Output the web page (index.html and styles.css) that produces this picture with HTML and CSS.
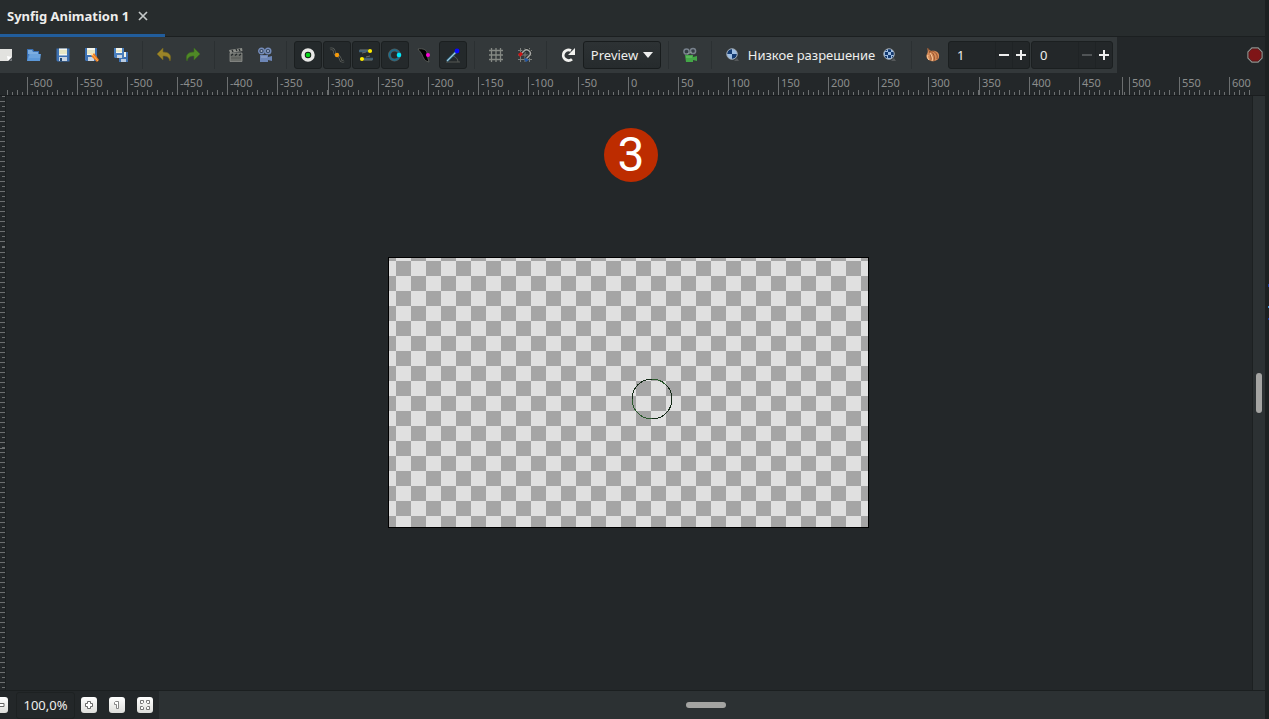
FILE: index.html
```html
<!DOCTYPE html>
<html lang="ru">
<head>
<meta charset="utf-8">
<title>Synfig Animation 1</title>
<link rel="stylesheet" href="styles.css">
</head>
<body>
<div class="window">
<main class="editor">
  <header class="tabs">
    <div class="tab">
      <span>Synfig Animation 1</span>
      <button class="tab-close" aria-label="Close"><svg width="10" height="10" viewBox="0 0 10 10"><path d="M1 1l8 8M9 1l-8 8" stroke="#c4c8c8" stroke-width="1.7" fill="none"/></svg></button>
    </div>
  </header>

  <div class="toolrow">
  <nav class="toolbar">
    <button class="tool" aria-label="New"><svg viewBox="0 0 16 16"><path d="M0 2h15v8l-4 4H0z" fill="#e2e2df"/><path d="M15 10h-4v4z" fill="#4b4e4e"/><path d="M10 9l5 1-4 4z" fill="#fff"/><path d="M15 11v3h-3z" fill="#73767a"/></svg></button>
    <button class="tool" aria-label="Open"><svg viewBox="0 0 16 16"><path d="M1 2h6l1 2h5v10H1z" fill="#3a70b4"/><path d="M2 3h4l1 2h5v2H2z" fill="#7daee0"/><path d="M3 7h12l-1 7H1z" fill="#5c98d8"/><path d="M4 8h10M3 10h11" stroke="#87b7e8" stroke-width=".7"/></svg></button>
    <button class="tool" aria-label="Save"><svg viewBox="0 0 16 16"><path d="M1.500 1.500h13v13h-12l-1-1z" fill="#3d71b3"/><path d="M4 1.500h8v7H4z" fill="#f6f6ec"/><path d="M4 4h8M4 6h8" stroke="#d8d89e"/><path d="M4 10h8v4H4z" fill="#c9d5e2"/><path d="M5 11h2v3H5z" fill="#20466f"/></svg></button>
    <button class="tool" aria-label="Save as"><svg viewBox="0 0 16 16"><path d="M1 1h12v13H2l-1-1z" fill="#3d71b3"/><path d="M3 1h8v7H3z" fill="#f6f6ec"/><path d="M3 4h8M3 6h8" stroke="#d8d89e"/><path d="M4 10h6v4H4z" fill="#c9d5e2"/><path d="M7 6l3 0 5 7-2 2-5-5z" fill="#ed7a18"/><path d="M8 7l6 7" stroke="#ffb35b"/><path d="M6 6l4 0-2 3z" fill="#ffe0a6"/></svg></button>
    <button class="tool" aria-label="Save all"><svg viewBox="0 0 16 16"><path d="M6 5h9v10H6z" fill="#3d71b3"/><path d="M10 5h3v5h-3z" fill="#f2f3e8"/><path d="M8 12h5v3H8z" fill="#b9cbe0"/><path d="M1 1h10v10H2l-1-1z" fill="#4a7fbd"/><path d="M3 1h6v5H3z" fill="#f6f6ec"/><path d="M3 4h6" stroke="#d8d89e"/><path d="M4 8h5v3H4z" fill="#c9d5e2"/></svg></button>
    <span class="sep"></span>
    <button class="tool" aria-label="Undo"><svg viewBox="0 0 16 16"><path d="M1 7l6-6v4c6 0 9 3 7 9-1-4-3-5-7-5v4z" fill="#9b8428" stroke="#72641e" stroke-width=".6"/></svg></button>
    <button class="tool" aria-label="Redo"><svg viewBox="0 0 16 16"><path d="M15 7L9 1v4C3 5 0 8 2 14c1-4 3-5 7-5v4z" fill="#4f8926" stroke="#3a691e" stroke-width=".6"/></svg></button>
    <span class="sep"></span>
    <button class="tool" aria-label="Render"><svg viewBox="0 0 16 16"><path d="M2 6h12v8.500H2z" fill="#6a6d69" stroke="#8d8f8b" stroke-width=".8"/><path d="M1 3l13-2 .5 3L2 6z" fill="#8c8e89"/><path d="M4 3l1 2M8 2l1 2M11 2l1 2" stroke="#252a2b" stroke-width="1.300"/><path d="M3 8.500l2-1.500M7 8.500l2-1.500M11 8.500l2-1.500" stroke="#252a2b" stroke-width="1.500"/><path d="M3 11h10" stroke="#4a4d4b" stroke-width=".7"/></svg></button>
    <button class="tool" aria-label="Preview window"><svg viewBox="0 0 16 16"><circle cx="4.500" cy="4" r="2.800" fill="#35465f" stroke="#758cb9" stroke-width="1.400"/><circle cx="11" cy="4" r="2.800" fill="#35465f" stroke="#758cb9" stroke-width="1.400"/><path d="M3 8h8v2l4-1v5l-4-1v2H3z" fill="#6d86b6"/><path d="M4 10h6" stroke="#9aabd0"/><circle cx="4.500" cy="4" r="1" fill="#a4b3cf"/><circle cx="11" cy="4" r="1" fill="#a4b3cf"/></svg></button>
    <span class="sep"></span>
    <button class="tool on" aria-label="Position handles"><svg viewBox="0 0 16 16"><circle cx="8" cy="8" r="5" fill="#171b18" stroke="#e8e8e6" stroke-width="3.500"/><circle cx="8" cy="8" r="2.300" fill="#08d61a"/></svg></button>
    <button class="tool on" aria-label="Vertex handles"><svg viewBox="0 0 16 16"><path d="M1 2c5-1 4 3 5 5s4 1 5 4 1 4 4 3" fill="none" stroke="#5c605d" stroke-width="2.500"/><path d="M1 2c5-1 4 3 5 5s4 1 5 4 1 4 4 3" fill="none" stroke="#191c1c" stroke-width="1"/><circle cx="8" cy="8" r="2.200" fill="#f59a0b"/></svg></button>
    <button class="tool on" aria-label="Tangent handles"><svg viewBox="0 0 16 16"><path d="M1 4h9M6 12h9" stroke="#3f6075" stroke-width="2.500"/><path d="M4 6l4-1M8 10l4-1M2 3h8M6 13h8" stroke="#696d6a"/><circle cx="12" cy="4" r="2.100" fill="#ffed00"/><circle cx="4" cy="12" r="2.100" fill="#ffed00"/></svg></button>
    <button class="tool on" aria-label="Radius handles"><svg viewBox="0 0 16 16"><circle cx="7.500" cy="8" r="5" fill="none" stroke="#50595b" stroke-width="3"/><circle cx="7.500" cy="8" r="5" fill="none" stroke="#176f90" stroke-width="1.500"/><circle cx="12" cy="8" r="2.300" fill="#00eafa"/></svg></button>
    <button class="tool" aria-label="Width handles"><svg viewBox="0 0 16 16"><path d="M2 2c5-1 10 1 9 6l2 7c-6-1-6-7-8-9C4 4 3 4 2 2z" fill="#000" stroke="#60635f" stroke-width=".8"/><circle cx="12" cy="8" r="2" fill="#ff00d8"/></svg></button>
    <button class="tool on" aria-label="Angle handles"><svg viewBox="0 0 16 16"><path d="M1 15h14M8 9c3 1 5 3 5 6" fill="none" stroke="#555955" stroke-width="1"/><path d="M2 14L12 4" stroke="#1d5472" stroke-width="2.600"/><path d="M2 14L12 4" stroke="#9ec9dc" stroke-width="1.200"/><circle cx="12" cy="4" r="2.400" fill="#0908ff"/></svg></button>
    <span class="sep"></span>
    <button class="tool" aria-label="Show grid"><svg viewBox="0 0 16 16"><path d="M3.500 1v14M8 1v14M12.500 1v14M1 3.500h14M1 8h14M1 12.500h14" stroke="#858984" stroke-width="1.300"/></svg></button>
    <button class="tool" aria-label="Snap to grid"><svg viewBox="0 0 16 16"><path d="M3.500 1v14M8 1v14M12.500 1v14M1 3.500h14M1 8h14M1 12.500h14" stroke="#7b7e7a"/><path d="M4 7l3-3c3-3 8 1 6 4l-4 4" stroke="#242829" stroke-width="3" fill="none"/><path d="M4 7l3-3c3-3 8 1 6 4l-4 4" stroke="#a8a9a6" stroke-width="1.500" fill="none"/><path d="M1 7l3-2 2 2-3 3z" fill="#d01414"/><path d="M7 12l2-1 3 2-3 2z" fill="#2558a2"/></svg></button>
    <span class="sep"></span>
    <button class="tool" aria-label="Refresh"><svg viewBox="0 0 16 16"><path d="M12 12.200a5.300 5.300 0 1 1-1-8.700" fill="none" stroke="#f2f2ef" stroke-width="2.800"/><path d="M15 1v7H8z" fill="#f2f2ef"/></svg></button>
    <button class="preview">Preview <svg width="10" height="6" viewBox="0 0 10 6"><path d="M0 0h10L5 6z" fill="#eee"/></svg></button>
    <span class="sep"></span>
    <button class="tool" aria-label="Background rendering"><svg viewBox="0 0 16 16"><circle cx="4.500" cy="4.500" r="2.600" fill="#343d45" stroke="#78818c" stroke-width="1.500"/><circle cx="11" cy="4" r="2.600" fill="#343d45" stroke="#78818c" stroke-width="1.500"/><path d="M3 8h8v2l4-1v5l-4-1v2H4z" fill="#43a747"/><path d="M4 10h6" stroke="#70c86e"/><path d="M5 7l5-2" stroke="#8b9b91"/></svg></button>
    <span class="sep"></span>
    <div class="resolution">
      <button class="tool" aria-label="Decrease resolution"><svg viewBox="0 0 16 16"><path d="M9 14h5l-2-3" fill="#55585a"/><circle cx="7" cy="7" r="5.200" fill="#9dbde2"/><path d="M7 7V2a5 5 0 0 0-5 5zM7 7v5a5 5 0 0 0 5-5z" fill="#143a70"/><circle cx="7" cy="7" r="5.300" fill="none" stroke="#a3acb4" stroke-width=".9"/></svg></button>
      <span>Низкое разрешение</span>
      <button class="tool" aria-label="Increase resolution"><svg viewBox="0 0 16 16"><path d="M9 14h5l-2-3" fill="#55585a"/><circle cx="7" cy="7" r="5.200" fill="#9dbde2"/><path d="M6 2h3v3H6zM3 5h3v3H3zM9 5h3v3H9zM6 8h3v3H6zM3 3h2v1H3zM3 9h2v2H3zM10 9h1v2h-1z" fill="#143a70"/><circle cx="7" cy="7" r="5.300" fill="none" stroke="#a3acb4" stroke-width=".9"/></svg></button>
    </div>
    <span class="sep"></span>
    <button class="tool" aria-label="Onion skin"><svg viewBox="0 0 16 16"><path d="M2 1l4 3c5-1 9 2 8 6 0 3-5 5-8 4s-6-4-4-7c1-2 1-4 0-6z" fill="#d58b58"/><path d="M3 1c1 3 4 8 3 13M5 4c4 2 5 6 4 10M7 4c4 1 6 4 5 8" fill="none" stroke="#824322" stroke-width=".8"/><path d="M3 8c-1 2 0 4 1 5M5 6c2 3 3 5 2 8" fill="none" stroke="#ffd0a1" stroke-width="1"/></svg></button>
    <div class="spin"><input aria-label="Past frames" value="1"><button aria-label="Fewer past frames"><svg viewBox="0 0 12 12"><path d="M1 6h10" stroke="#eee" stroke-width="2"/></svg></button><button aria-label="More past frames"><svg viewBox="0 0 12 12"><path d="M1 6h10M6 1v10" stroke="#eee" stroke-width="2"/></svg></button></div>
    <div class="spin"><input aria-label="Future frames" value="0"><button aria-label="Fewer future frames" disabled><svg viewBox="0 0 12 12"><path d="M1 6h10" stroke="#505456" stroke-width="2"/></svg></button><button aria-label="More future frames"><svg viewBox="0 0 12 12"><path d="M1 6h10M6 1v10" stroke="#eee" stroke-width="2"/></svg></button></div>
  </nav>
  <button class="record" aria-label="Stop"><svg width="16" height="16" viewBox="0 0 16 16"><path d="M5 1h6l4 4v6l-4 4H5l-4-4V5z" fill="#7f1517" stroke="#8c8e8b" stroke-width="1.400"/><path d="M5 2h6l3 3v6l-3 3H5l-3-3V5z" fill="none" stroke="#4c1718" stroke-width=".7"/></svg></button>
  </div>

  <div class="ruler" id="ruler"></div>

  <div class="work">
    <div class="vruler"><i class="upper"></i><i class="lower"></i></div>
    <section class="canvas">
      <div class="step">3</div>
      <div class="artboard"><svg class="origin" width="42" height="42" viewBox="0 0 42 42" shape-rendering="crispEdges"><circle cx="21" cy="21" r="20" fill="none" stroke="#142a17"/><path d="M1 21a20 20 0 0 0 20 20M21 1a20 20 0 0 1 14 6" fill="none" stroke="#2b5a2d"/></svg></div>
    </section>
    <div class="vscroll"><i></i></div>
  </div>

  <footer class="status">
    <button class="zoom first" aria-label="Zoom out"><svg viewBox="0 0 16 16"><path d="M4 6.500h8v3H4z" fill="#fff" stroke="#666"/></svg></button>
    <input class="percent" aria-label="Zoom" value="100,0%">
    <button class="zoom" aria-label="Zoom in"><svg viewBox="0 0 16 16"><path d="M6.500 4.500h3v2h2v3h-2v2h-3v-2h-2v-3h2z" fill="#fff" stroke="#696969"/></svg></button>
    <button class="zoom" aria-label="Normal size"><svg viewBox="0 0 16 16"><path d="M5.500 5.500l1-1h3v7h-2v-4h-2z" fill="#fff" stroke="#858585"/></svg></button>
    <button class="zoom" aria-label="Fit"><svg viewBox="0 0 16 16"><path d="M3.500 3.500h3v2l-1 1h-2zM9.500 3.500h3v3h-2l-1-1zM3.500 9.500h2l1 1v2h-3zM10.500 9.500h2v3h-3v-2z" fill="#fff" stroke="#777"/></svg></button>
    <div class="hscroll"><i></i></div>
  </footer>
</main>
<aside class="edge"></aside>
</div>
<script src="ruler.js"></script>
</body>
</html>
```

FILE: styles.css
```css
* { box-sizing: border-box; }
body {
  margin: 0;
  background: #232729;
  color: #eeeeec;
  font: 13px/18px "Noto Sans", "Open Sans", sans-serif;
}
button, input { font: inherit; color: inherit; border: 0; padding: 0; margin: 0; background: none; }
svg { display: block; flex: none; }
.window { display: flex; height: 100vh; overflow: hidden; }
.editor { flex: 1; min-width: 0; display: flex; flex-direction: column; }
.edge {
  width: 4px;
  background:
    linear-gradient(#1c3d9c, #1c3d9c) 3px 284px / 1px 3px no-repeat,
    linear-gradient(#4795d8, #4795d8) 3px 306px / 1px 2px no-repeat,
    linear-gradient(#1c3d9c, #1c3d9c) 3px 318px / 1px 2px no-repeat,
    #1c2021;
}

.tabs { display: flex; height: 37px; background: #272c2d; border-bottom: 1px solid #1b1f20; }
.tab { display: flex; width: 165px; height: 37px; padding: 0 16px 3px 7px; gap: 9px; align-items: center; font-weight: 700; border-bottom: 3px solid #215d9c; }
.tab span { white-space: nowrap; }

.toolrow { display: flex; height: 36px; justify-content: space-between; overflow: hidden; }
.toolbar { display: flex; flex: none; align-items: center; gap: 1px; padding-right: 4px; margin-left: -9px; background: #33383a; }
.tool { display: flex; flex: none; width: 28px; height: 28px; align-items: center; justify-content: center; }
.tool svg { width: 16px; height: 16px; }
.tool.on { background: #24292b; border: 1px solid #1b1f20; border-radius: 3px; }
.sep { width: 1px; height: 28px; margin: 0 6px; background: #2b3032; }
.preview { display: flex; width: 78px; height: 28px; align-items: center; justify-content: center; gap: 5px; background: linear-gradient(#2d3234, #262b2d); border: 1px solid #181c1d; border-radius: 3px; }
.resolution { display: flex; width: 185px; align-items: center; justify-content: space-between; white-space: nowrap; }
.spin { display: flex; width: 82px; height: 28px; background: #232729; border: 1px solid #1b1f20; border-radius: 3px; }
.spin input { flex: 1; min-width: 0; padding-left: 8px; }
.spin button { display: flex; width: 17px; align-items: center; justify-content: center; border-left: 1px solid #1f2325; }
.spin svg { width: 12px; height: 12px; }
.record { padding: 0 2px; }

.ruler { display: flex; height: 23px; padding-top: 4px; overflow: hidden; border-bottom: 1px solid #1a1d1f; font-size: 11px; line-height: 12px; color: #8b8d8c; position: relative; }
.mark {
  flex: none;
  width: 50px;
  height: 18px;
  padding-left: 2px;
  border-left: 1px solid #6c6f70;
  background:
    repeating-linear-gradient(90deg, transparent 0 9px, #6c6f70 9px 10px) 0 13px / 100% 5px no-repeat,
    repeating-linear-gradient(90deg, transparent 0 4px, #6c6f70 4px 5px) 0 15px / 100% 3px no-repeat;
}
.mark.wide { width: 51px; }
.mark.head { width: 20px; margin-left: 7px; border: 0; background:
    repeating-linear-gradient(90deg, #6c6f70 0 1px, transparent 1px 10px) 0 13px / 100% 5px no-repeat,
    repeating-linear-gradient(90deg, #6c6f70 0 1px, transparent 1px 5px) 0 15px / 100% 3px no-repeat; }
.mark.tail { width: 23px; }
.pointer { position: absolute; left: 1122px; top: 4px; width: 1px; height: 18px; background: #6c6f70; }

.work { flex: 1; display: flex; min-height: 0; }
.vruler { width: 6px; display: flex; flex-direction: column; border-right: 1px solid #1c2021; background: linear-gradient(#6c6f70, #6c6f70) 0 352px / 5px 1px no-repeat; }
.vruler i {
  background:
    repeating-linear-gradient(transparent 0 5px, #6c6f70 5px 6px, transparent 6px 10px),
    repeating-linear-gradient(#6c6f70 0 1px, transparent 1px 10px) 2px 0 / 3px 100% no-repeat;
}
.upper { height: 151px; }
.lower { flex: 1; }
.canvas { flex: 1; display: flex; flex-direction: column; align-items: center; padding: 32px 2px 0 0; min-width: 0; }
.step { width: 54px; height: 54px; border-radius: 50%; background: #bd2c00; color: #fff; font: 400 48px/54px Roboto, "Open Sans", sans-serif; text-align: center; margin-left: 6px; }
.artboard {
  width: 481px;
  height: 271px;
  flex: none;
  margin-top: 75px;
  border: 1px solid #000;
  background: conic-gradient(#e0e0e0 25%, #a5a5a5 0 50%, #e0e0e0 0 75%, #a5a5a5 0) 7px 3px / 30px 30px;
  position: relative;
}
.origin { position: absolute; left: 242px; top: 120px; }
.vscroll { width: 13px; display: flex; align-items: center; justify-content: center; background: #2c3133; border-left: 1px solid #1c2021; }
.vscroll i { width: 6px; height: 40px; border-radius: 3px; background: #a4a4a2; }

.status { display: flex; height: 29px; align-items: center; border-top: 1px solid #1b1f20; gap: 12px; }
.zoom { width: 16px; height: 16px; flex: none; border-radius: 3px; background: linear-gradient(#fff, #ddddda); }
.zoom svg { width: 16px; height: 16px; }
.first { margin: 0 -4px 0 -8px; }
.percent { width: 59px; height: 27px; margin-right: -6px; text-align: center; border: 1px solid #1d2122; border-radius: 3px; }
.hscroll { flex: 1; display: flex; align-items: center; justify-content: center; align-self: stretch; margin-left: -6px; background: #2c3133; }
.hscroll i { width: 40px; height: 6px; border-radius: 3px; background: #a4a4a2; margin-right: 12px; }
```

FILE: ruler.js
```js
const ruler = document.getElementById('ruler');

function addMark(className, text) {
  const mark = document.createElement('span');
  mark.className = className;
  mark.textContent = text;
  ruler.append(mark);
}

addMark('mark head', '');
for (let unit = -600; unit <= 600; unit += 50) {
  const wide = unit === -350 || unit === 300;
  const last = unit === 600;
  addMark('mark' + (wide ? ' wide' : '') + (last ? ' tail' : ''), String(unit));
}
addMark('pointer', '');
```
